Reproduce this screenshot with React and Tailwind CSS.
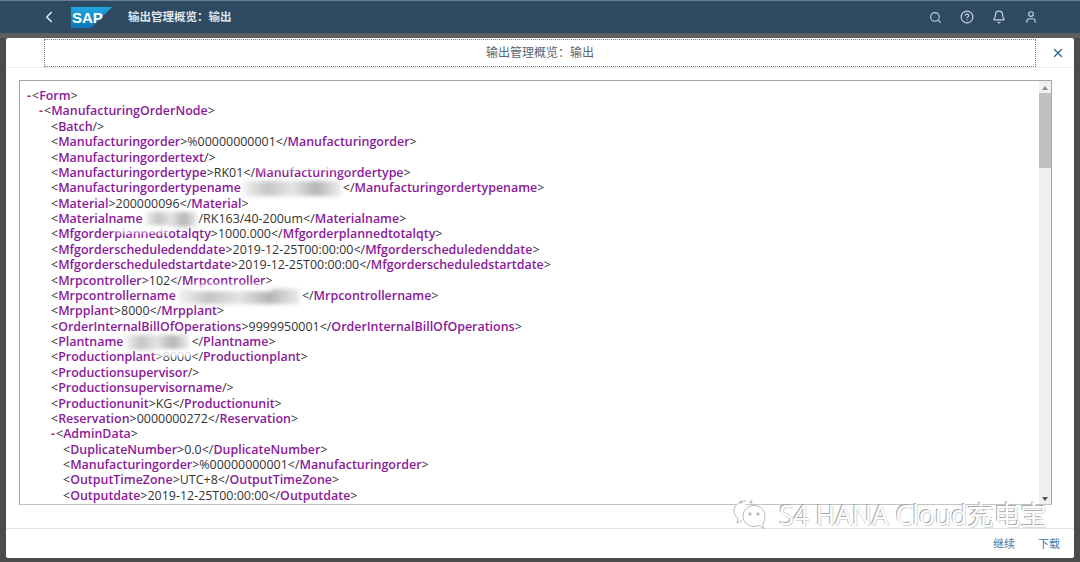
import { Bell, ChevronLeft, CircleHelp, Search, User, X } from "lucide-react";

const FONT = "font-['Open_Sans','Noto_Sans_CJK_SC',sans-serif]";

// level: indent steps, fold: shows the minus sign, blur: width of the smudged part
const rows = [
  { level: 0, fold: true, open: "Form" },
  { level: 1, fold: true, open: "ManufacturingOrderNode" },
  { level: 2, empty: "Batch" },
  { level: 2, tag: "Manufacturingorder", value: "%00000000001" },
  { level: 2, empty: "Manufacturingordertext" },
  { level: 2, tag: "Manufacturingordertype", value: "RK01" },
  { level: 2, tag: "Manufacturingordertypename", blur: 98 },
  { level: 2, tag: "Material", value: "200000096" },
  { level: 2, tag: "Materialname", blur: 52, value: "/RK163/40-200um" },
  { level: 2, tag: "Mfgorderplannedtotalqty", value: "1000.000" },
  { level: 2, tag: "Mfgorderscheduledenddate", value: "2019-12-25T00:00:00" },
  { level: 2, tag: "Mfgorderscheduledstartdate", value: "2019-12-25T00:00:00" },
  { level: 2, tag: "Mrpcontroller", value: "102" },
  { level: 2, tag: "Mrpcontrollername", blur: 122 },
  { level: 2, tag: "Mrpplant", value: "8000" },
  { level: 2, tag: "OrderInternalBillOfOperations", value: "9999950001" },
  { level: 2, tag: "Plantname", blur: 64 },
  { level: 2, tag: "Productionplant", value: "8000" },
  { level: 2, empty: "Productionsupervisor" },
  { level: 2, empty: "Productionsupervisorname" },
  { level: 2, tag: "Productionunit", value: "KG" },
  { level: 2, tag: "Reservation", value: "0000000272" },
  { level: 2, fold: true, open: "AdminData" },
  { level: 3, tag: "DuplicateNumber", value: "0.0" },
  { level: 3, tag: "Manufacturingorder", value: "%00000000001" },
  { level: 3, tag: "OutputTimeZone", value: "UTC+8" },
  { level: 3, tag: "Outputdate", value: "2019-12-25T00:00:00" },
];

const INDENT = ["pl-[14px]", "pl-[26px]", "pl-[31px]", "pl-[43px]"];
const FOLD_INDENT = ["pl-[7px]", "pl-[19px]", "pl-[31px]"];

function Name({ children }) {
  return <span className="font-semibold text-[#8a1a9a]">{children}</span>;
}

function Row({ row }) {
  const pad = row.fold ? FOLD_INDENT[row.level] : INDENT[row.level];
  return (
    <div className={`${pad} h-[15.38px] whitespace-nowrap`}>
      {row.fold && <span className="mr-[1px] font-bold text-[#b5375f]">-</span>}
      {row.open && (
        <>
          &lt;<Name>{row.open}</Name>&gt;
        </>
      )}
      {row.empty && (
        <>
          &lt;<Name>{row.empty}</Name>/&gt;
        </>
      )}
      {row.tag && (
        <>
          &lt;<Name>{row.tag}</Name>
          {row.blur ? (
            <span
              className="mx-[2px] inline-block h-[15px] align-middle bg-[linear-gradient(90deg,#f4f4f4,#c4c4c4,#e4e4e4,#b4b4b4,#eeeeee)] blur-[2px]"
              style={{ width: row.blur }}
            />
          ) : (
            <>&gt;</>
          )}
          {row.value}
          &lt;/<Name>{row.tag}</Name>&gt;
        </>
      )}
    </div>
  );
}

function SapLogo() {
  return (
    <svg width="41" height="21" viewBox="0 0 41 21" className="shrink-0">
      <defs>
        <linearGradient id="sapBlue" x1="0" y1="0" x2="0" y2="1">
          <stop offset="0" stopColor="#1fa6e0" />
          <stop offset="1" stopColor="#0f76b8" />
        </linearGradient>
      </defs>
      <polygon points="0,0 41,0 20,21 0,21" fill="url(#sapBlue)" />
      <text x="1" y="15.500" fontFamily="Liberation Sans" fontWeight="700" fontSize="15" fill="#ffffff">
        SAP
      </text>
    </svg>
  );
}

function Watermark() {
  return (
    <div className="pointer-events-none absolute left-[732px] top-[499px] flex items-center gap-[3px]">
      <svg width="44" height="32" viewBox="0 0 44 32" fill="none" stroke="#b9b9b9" strokeWidth="1">
        <path d="M14 2C7 2 2 6.500 2 12c0 3 1.500 5.500 4 7.500L5 24l5-2.500" fill="#ffffff" />
        <path d="M33 17c0-6-5-10.500-11-10.500S11 11 11 17s5 10.500 11 10.500c2 0 3-.3 5-1l5 3-1.500-4.500c2-2 2.500-5 2.500-8z" fill="#ffffff" />
        <circle cx="18" cy="15" r="1.200" fill="#b9b9b9" />
        <circle cx="26" cy="15" r="1.200" fill="#b9b9b9" />
        <circle cx="9" cy="3" r="1.500" fill="#b9b9b9" stroke="none" />
        <circle cx="19" cy="3" r="1.500" fill="#b9b9b9" stroke="none" />
      </svg>
      <span className="text-[26.5px] leading-[30px] text-white [text-shadow:-1px_-1px_0_#a8a8a8,1px_1px_0_#d8d8d8] font-['Open_Sans','Noto_Sans_CJK_SC',sans-serif] whitespace-nowrap">
        S4 HANA Cloud充电宝
      </span>
    </div>
  );
}

// pale retouching smears that cut across a few rows of the xml
function Smears() {
  return (
    <>
      <div className="absolute left-[258px] top-[163px] h-[6px] w-[96px] bg-white blur-[2px]" />
      <div className="absolute left-[115px] top-[226px] h-[6px] w-[55px] bg-white blur-[2px]" />
      <div className="absolute left-[190px] top-[285px] h-[6px] w-[82px] bg-white blur-[2px]" />
      <div className="absolute left-[155px] top-[350px] h-[6px] w-[38px] bg-white blur-[2px]" />
    </>
  );
}

export default function App() {
  return (
    <div className={`${FONT} relative flex h-[562px] w-[1080px] flex-col overflow-hidden bg-[#4b4b4b]`}>
      <header className="flex h-[33px] shrink-0 items-center border-t border-[#6c7f92] bg-[#2f4a63] text-[#dfe6ec]">
        <ChevronLeft size={18} strokeWidth={2.2} className="ml-[40px]" />
        <div className="ml-[13px]">
          <SapLogo />
        </div>
        <div className="ml-[16px] text-[11.5px] font-semibold">输出管理概览：输出</div>
        <div className="ml-auto mr-[42px] flex items-center gap-[18px] text-[#c8d3dd]">
          <Search size={13} />
          <CircleHelp size={14} />
          <Bell size={14} />
          <User size={14} />
        </div>
      </header>

      <div className="h-[5px] shrink-0 bg-[#5d5f5e]" />

      <main className="mx-[6px] flex h-[520px] flex-col rounded-[2px] bg-white">
        <div className="flex h-[30px] shrink-0 items-center border-b border-[#ececec]">
          <div className="ml-[38px] flex h-[28px] w-[992px] items-center justify-center border border-dotted border-[#777777] text-[12px] text-[#5b6670]">
            输出管理概览：输出
          </div>
          <X size={14} strokeWidth={2.4} className="ml-[15px] text-[#2a6a8a]" />
        </div>

        <div className="mx-[13px] mt-[12px] flex h-[425px] w-[1033px] shrink-0 overflow-hidden border border-[#a3a3a3] border-b-[#c4c4c4] bg-white">
          <div className="min-w-0 flex-1 overflow-hidden pt-[7px] text-[12.45px] leading-[15.38px] text-[#333333]">
            {rows.map((row, i) => (
              <Row key={i} row={row} />
            ))}
          </div>
          <div className="flex w-[12px] shrink-0 flex-col items-center bg-[#f0f0f0]">
            <span className="mt-[5px] h-0 w-0 border-x-[3px] border-b-[4px] border-x-transparent border-b-[#8a8a8a]" />
            <div className="mt-[3px] h-[75px] w-full bg-[#c1c1c1]" />
            <span className="mb-[3px] mt-auto h-0 w-0 border-x-[3px] border-t-[4px] border-x-transparent border-t-[#555555]" />
          </div>
        </div>

        <div className="mt-[23px] flex h-[29px] shrink-0 items-center justify-end gap-[23px] border-t border-[#e4e4e4] pr-[14px] pt-[3px] text-[11px] text-[#427cac]">
          <span>继续</span>
          <span>下载</span>
        </div>
      </main>

      <Smears />
      <Watermark />
    </div>
  );
}
